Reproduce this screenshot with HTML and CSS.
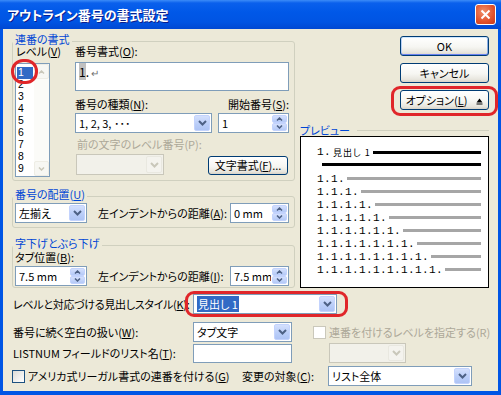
FILE: index.html
```html
<!DOCTYPE html>
<html lang="ja">
<head>
<meta charset="UTF-8">
<title>アウトライン番号の書式設定</title>
<link rel="stylesheet" href="styles.css">
</head>
<body>
<div class="window">
	<div class="titlebar">
		<span class="title">アウトライン番号の書式設定</span>
		<span class="close"><svg width="11" height="11" viewBox="0 0 11 11"><path d="M1.5 1.5L9.5 9.5M9.5 1.5L1.5 9.5" stroke="#fff" stroke-width="2"/></svg></span>
	</div>
	<div class="client">
		<div class="top">
			<div class="left">
				<fieldset class="group g1">
					<legend>連番の書式</legend>
					<div class="g-body">
						<div class="level">
							<div class="lbl">レベル(<u>V</u>)</div>
							<div class="listbox">
								<div class="items">
									<div class="item sel">1</div>
									<div class="item">2</div>
									<div class="item">3</div>
									<div class="item">4</div>
									<div class="item">5</div>
									<div class="item">6</div>
									<div class="item">7</div>
									<div class="item">8</div>
									<div class="item">9</div>
								</div>
								<div class="vscroll">
									<span class="sbtn"><svg width="7" height="4" viewBox="0 0 7 4"><path d="M1 3.5L3.5 1L6 3.5" fill="none" stroke="#C9C7BA" stroke-width="1.5"/></svg></span>
									<span class="sbtn"><svg width="7" height="4" viewBox="0 0 7 4"><path d="M1 0.5L3.5 3L6 0.5" fill="none" stroke="#C9C7BA" stroke-width="1.5"/></svg></span>
								</div>
							</div>
						</div>
						<div class="fmt">
							<div class="lbl">番号書式(<u>O</u>):</div>
							<div class="edit tall"><span class="field">1</span>.<span class="para">↵</span></div>
							<div class="row labels">
								<span class="w-kind">番号の種類(<u>N</u>):</span>
								<span>開始番号(<u>S</u>):</span>
							</div>
							<div class="row">
								<div class="combo w-kind">
									<span class="val">1, 2, 3, ･･･</span>
									<span class="drop"><svg width="9" height="6" viewBox="0 0 9 6"><path d="M1 1L4.5 4.5L8 1" fill="none" stroke="#4D6185" stroke-width="2"/></svg></span>
								</div>
								<div class="spin w-start">
									<span class="val">1</span>
									<span class="arrows">
										<span><svg width="7" height="4" viewBox="0 0 7 4"><path d="M1 3.5L3.5 1L6 3.5" fill="none" stroke="#4D6185" stroke-width="1.5"/></svg></span>
										<span><svg width="7" height="4" viewBox="0 0 7 4"><path d="M1 0.5L3.5 3L6 0.5" fill="none" stroke="#4D6185" stroke-width="1.5"/></svg></span>
									</span>
								</div>
							</div>
							<div class="lbl dis prev-lbl">前の文字のレベル番号(P):</div>
							<div class="row bottom-row">
								<div class="combo disabled w-prev">
									<span class="val"></span>
									<span class="drop"><svg width="9" height="6" viewBox="0 0 9 6"><path d="M1 1L4.5 4.5L8 1" fill="none" stroke="#C9C7BA" stroke-width="2"/></svg></span>
								</div>
								<span class="btn w-font">文字書式(<u>F</u>)...</span>
							</div>
						</div>
					</div>
				</fieldset>

				<fieldset class="group g2">
					<legend>番号の配置(<u>U</u>)</legend>
					<div class="g-body line">
						<div class="combo w-small">
							<span class="val">左揃え</span>
							<span class="drop"><svg width="9" height="6" viewBox="0 0 9 6"><path d="M1 1L4.5 4.5L8 1" fill="none" stroke="#4D6185" stroke-width="2"/></svg></span>
						</div>
						<span class="mid-lbl">左インデントからの距離(<u>A</u>):</span>
						<div class="spin w-mm">
							<span class="val">0 mm</span>
							<span class="arrows">
								<span><svg width="7" height="4" viewBox="0 0 7 4"><path d="M1 3.5L3.5 1L6 3.5" fill="none" stroke="#4D6185" stroke-width="1.5"/></svg></span>
								<span><svg width="7" height="4" viewBox="0 0 7 4"><path d="M1 0.5L3.5 3L6 0.5" fill="none" stroke="#4D6185" stroke-width="1.5"/></svg></span>
							</span>
						</div>
					</div>
				</fieldset>

				<fieldset class="group g3">
					<legend>字下げとぶら下げ</legend>
					<div class="g-body">
						<div class="lbl tab-lbl">タブ位置(<u>B</u>):</div>
						<div class="line">
							<div class="spin w-small">
								<span class="val">7.5 mm</span>
								<span class="arrows">
									<span><svg width="7" height="4" viewBox="0 0 7 4"><path d="M1 3.5L3.5 1L6 3.5" fill="none" stroke="#4D6185" stroke-width="1.5"/></svg></span>
									<span><svg width="7" height="4" viewBox="0 0 7 4"><path d="M1 0.5L3.5 3L6 0.5" fill="none" stroke="#4D6185" stroke-width="1.5"/></svg></span>
								</span>
							</div>
							<span class="mid-lbl">左インデントからの距離(<u>I</u>):</span>
							<div class="spin w-mm">
								<span class="val">7.5 mm</span>
								<span class="arrows">
									<span><svg width="7" height="4" viewBox="0 0 7 4"><path d="M1 3.5L3.5 1L6 3.5" fill="none" stroke="#4D6185" stroke-width="1.5"/></svg></span>
									<span><svg width="7" height="4" viewBox="0 0 7 4"><path d="M1 0.5L3.5 3L6 0.5" fill="none" stroke="#4D6185" stroke-width="1.5"/></svg></span>
								</span>
							</div>
						</div>
					</div>
				</fieldset>
			</div>

			<div class="right">
				<span class="btn default">OK</span>
				<span class="btn">キャンセル</span>
				<span class="btn">オプション(<u>L</u>)<svg class="tri" width="7" height="7" viewBox="0 0 7 7"><path d="M3.5 0.5L6.5 4.5H0.5Z" fill="#000"/><rect x="0.5" y="5.5" width="6" height="1" fill="#000"/></svg></span>
				<div class="pv-head">プレビュー</div>
				<div class="preview">
					<div class="pv-row first">
						<span class="num">1.</span><span class="head">見出し 1</span><span class="bar black"></span>
					</div>
					<div class="bar black wrap"></div>
					<div class="pv-row"><span class="num">1.1.</span><span class="bar"></span></div>
					<div class="pv-row"><span class="num">1.1.1.</span><span class="bar"></span></div>
					<div class="pv-row"><span class="num">1.1.1.1.</span><span class="bar"></span></div>
					<div class="pv-row"><span class="num">1.1.1.1.1.</span><span class="bar"></span></div>
					<div class="pv-row"><span class="num">1.1.1.1.1.1.</span><span class="bar"></span></div>
					<div class="pv-row"><span class="num">1.1.1.1.1.1.1.</span><span class="bar"></span></div>
					<div class="pv-row"><span class="num">1.1.1.1.1.1.1.1.</span><span class="bar"></span></div>
					<div class="pv-row"><span class="num">1.1.1.1.1.1.1.1.1.</span><span class="bar"></span></div>
				</div>
			</div>
		</div>

		<div class="rows">
			<div class="frow ra">
				<span class="flbl">レベルと対応づける見出しスタイル(<u>K</u>):</span>
				<div class="combo w-style">
					<span class="val"><span class="hl">見出し 1</span></span>
					<span class="drop"><svg width="9" height="6" viewBox="0 0 9 6"><path d="M1 1L4.5 4.5L8 1" fill="none" stroke="#4D6185" stroke-width="2"/></svg></span>
				</div>
			</div>
			<div class="frow rb">
				<span class="flbl">番号に続く空白の扱い(<u>W</u>):</span>
				<div class="combo w-mid">
					<span class="val">タブ文字</span>
					<span class="drop"><svg width="9" height="6" viewBox="0 0 9 6"><path d="M1 1L4.5 4.5L8 1" fill="none" stroke="#4D6185" stroke-width="2"/></svg></span>
				</div>
				<span class="check disabled"></span>
				<span class="dis">連番を付けるレベルを指定する(R)</span>
			</div>
			<div class="frow rc">
				<span class="flbl">LISTNUM フィールドのリスト名(<u>T</u>):</span>
				<div class="edit w-mid"></div>
				<div class="combo disabled w-lvl">
					<span class="val"></span>
					<span class="drop"><svg width="9" height="6" viewBox="0 0 9 6"><path d="M1 1L4.5 4.5L8 1" fill="none" stroke="#C9C7BA" stroke-width="2"/></svg></span>
				</div>
			</div>
			<div class="frow rd">
				<span class="legal"><span class="check"></span>アメリカ式リーガル書式の連番を付ける(<u>G</u>)</span>
				<span class="target-lbl">変更の対象(<u>C</u>):</span>
				<div class="combo w-target">
					<span class="val">リスト全体</span>
					<span class="drop"><svg width="9" height="6" viewBox="0 0 9 6"><path d="M1 1L4.5 4.5L8 1" fill="none" stroke="#4D6185" stroke-width="2"/></svg></span>
				</div>
			</div>
		</div>
	</div>

	<div class="mark mark-level"></div>
	<div class="mark mark-option"></div>
	<div class="mark mark-style"></div>
</div>
</body>
</html>
```

FILE: styles.css
```css
* {
	box-sizing: border-box;
}
body {
	margin: 0;
	font-family: "Noto Sans CJK JP", "Liberation Sans", sans-serif;
	font-size: 11px;
	font-feature-settings: "palt";
	white-space: nowrap;
	color: #000;
	background: #ece9d8;
}
u {
	text-decoration: underline;
	text-underline-offset: 1px;
}
.window {
	position: relative;
	width: 501px;
	height: 395px;
	background: #0055e5;
	display: flex;
	flex-direction: column;
}
.titlebar {
	height: 29px;
	flex: none;
	display: flex;
	align-items: center;
	padding: 0 5px 0 7px;
	background: linear-gradient(#3c8cf8 0, #0a60ec 3px, #0058e8 12px, #0054e3 22px, #0048d2 29px);
}
.title {
	flex: 1;
	color: #fff;
	font-weight: bold;
	font-size: 13px;
	text-shadow: 1px 1px 0 #0a1e8c;
}
.close {
	width: 21px;
	height: 21px;
	border: 1px solid #fff;
	border-radius: 3px;
	background: radial-gradient(circle at 40% 35%, #f0906a, #e1512c 60%, #c4391a);
	display: flex;
	align-items: center;
	justify-content: center;
}
.client {
	flex: 1;
	margin: 0 3px 4px;
	background: #ece9d8;
	padding: 4px 0 0 9px;
}
.top {
	display: flex;
}
.left {
	width: 283px;
}

/* group boxes */
.group {
	margin: 0;
	padding: 0 5px 0 2px;
	border: 1px solid #d0d0bf;
	border-radius: 3px;
	min-width: 0;
}
.group legend {
	height: 16px;
	line-height: 12px;
	padding: 0 2px;
	margin-left: -2px;
	color: #0046d5;
}
.g-body {
	margin-top: -5px;
}
.g1 {
	padding-bottom: 3px;
}
.g1 .g-body {
	display: flex;
}
.g2 {
	margin-top: 7px;
	padding-bottom: 4px;
}
.g2 .g-body {
	margin-top: -1px;
}
.g3 {
	margin-top: 9px;
	padding-bottom: 1px;
}
.line {
	display: flex;
	align-items: center;
	height: 20px;
}
.mid-lbl {
	margin-left: 11px;
}
.line .w-mm {
	margin-left: auto;
}
.lbl {
	line-height: 14px;
}
.tab-lbl {
	height: 18px;
	padding-top: 2px;
}
.dis {
	color: #aca899;
}

/* level list */
.level {
	width: 35px;
	flex: none;
}
.level .lbl {
	height: 19px;
	padding-left: 1px;
}
.listbox {
	height: 114px;
	border: 1px solid #7f9db9;
	background: #fff;
	display: flex;
}
.items {
	flex: 1;
	padding: 3px 0 0 1px;
	font-family: "Liberation Sans", sans-serif;
	font-size: 10.4px;
}
.item {
	height: 12px;
	line-height: 12px;
	padding-left: 1px;
}
.item.sel {
	background: #316ac5;
	color: #fff;
	width: 16px;
}
.vscroll {
	width: 15px;
	background: #fbfbf8;
	display: flex;
	flex-direction: column;
	justify-content: space-between;
}
.sbtn {
	height: 15px;
	border: 1px solid #eeede5;
	border-radius: 2px;
	background: #f7f7f3;
	display: flex;
	align-items: center;
	justify-content: center;
}

/* format column */
.fmt {
	width: 214px;
	margin-left: 25px;
}
.fmt > .lbl:first-child {
	height: 18px;
}
.edit {
	border: 1px solid #7f9db9;
	background: #fff;
}
.edit.tall {
	height: 29px;
	padding: 2px 0 0 3px;
	line-height: 14px;
	font-size: 12px;
}
.field {
	background: #c0c0c0;
}
.para {
	color: #707070;
	font-size: 10px;
	margin-left: 2px;
}
.row {
	display: flex;
	justify-content: space-between;
}
.row.labels {
	height: 16px;
	margin-top: 6px;
	line-height: 14px;
}
.row.labels .w-kind {
	width: 143px;
}
.prev-lbl {
	height: 16px;
	margin-top: 3px;
	padding-top: 1px;
	padding-left: 2px;
}
.bottom-row {
	height: 23px;
	align-items: flex-end;
}

/* controls */
.combo,
.spin {
	height: 20px;
	border: 1px solid #7f9db9;
	background: #fff;
	display: flex;
	flex: none;
}
.combo .val,
.spin .val {
	flex: 1;
	padding-left: 3px;
	line-height: 18px;
	overflow: hidden;
}
.drop {
	width: 16px;
	margin: 1px;
	border: 1px solid #c3d3fd;
	border-radius: 2px;
	background: linear-gradient(#d4e0fd, #b9cdf8 60%, #aec4f5);
	display: flex;
	align-items: center;
	justify-content: center;
}
.arrows {
	width: 15px;
	flex: none;
	margin: 1px;
	display: flex;
	flex-direction: column;
}
.arrows span {
	flex: 1;
	border: 1px solid #c3d3fd;
	border-radius: 2px;
	background: linear-gradient(#d4e0fd, #b4c9f7);
	display: flex;
	align-items: center;
	justify-content: center;
}
.combo.disabled {
	border-color: #c9c7ba;
	background: #f2f1ea;
}
.combo.disabled .drop {
	border-color: #e9e8e0;
	background: #f4f3ee;
}
.w-kind {
	width: 137px;
}
.w-start {
	width: 71px;
}
.w-prev {
	width: 88px;
	height: 21px;
	margin-left: 1px;
}
.w-small {
	width: 72px;
}
.w-mm {
	width: 59px;
}
.btn {
	display: block;
	height: 20px;
	border: 1px solid #003c74;
	border-radius: 3px;
	background: linear-gradient(#fff, #f6f6f2 55%, #e8e6de 85%, #d8d3c8);
	text-align: center;
	line-height: 18px;
}
.btn.default {
	box-shadow: inset 0 1px #cee7ff, inset 0 -1px #6982ee, inset 1px 0 #b9d1f6, inset -1px 0 #89ade4;
}
.w-font {
	width: 80px;
	height: 19px;
	line-height: 17px;
	margin-right: 1px;
}
.tri {
	margin-left: 9px;
	vertical-align: 0;
}

/* right column */
.right {
	width: 189px;
	margin-left: 5px;
	display: flex;
	flex-direction: column;
}
.right .btn {
	width: 89px;
	align-self: flex-end;
	margin-top: 7px;
}
.right .btn:first-child {
	margin-top: 3px;
}
.pv-head {
	height: 12px;
	line-height: 12px;
	margin-top: 14px;
	color: #0046d5;
	display: flex;
	align-items: center;
}
.pv-head::after {
	content: "";
	flex: 1;
	height: 1px;
	margin-left: 7px;
	background: #d0d0bf;
}
.preview {
	height: 152px;
	border: 1px solid #000;
	background: #fff;
	padding: 8px 7px 0 16px;
}
.pv-row {
	display: flex;
	align-items: center;
	height: 13px;
}
.pv-row.first {
	height: 14px;
	margin-bottom: 4px;
}
.num {
	font-family: "Liberation Mono", monospace;
	font-size: 11px;
	letter-spacing: 0.4px;
}
.head {
	font-size: 9px;
	margin-left: 2px;
	letter-spacing: 1px;
}
.bar {
	flex: 1;
	height: 3px;
	margin-left: 2px;
	background: #a6a6a6;
}
.bar.black {
	background: #000;
}
.bar.wrap {
	flex: none;
	margin: 0 0 6px 5px;
}

/* bottom rows */
.rows {
	margin-top: 6px;
}
.frow {
	display: flex;
	align-items: center;
	height: 20px;
}
.flbl {
	width: 181px;
	flex: none;
	padding-left: 1px;
}
.ra .flbl {
	letter-spacing: -0.3px;
}
.rb {
	margin-top: 8px;
}
.rc {
	margin-top: 1px;
}
.rd {
	margin-top: 3px;
}
.w-style {
	width: 144px;
}
.hl {
	background: #316ac5;
	color: #fff;
	padding: 0 1px;
}
.w-mid {
	width: 99px;
}
.rc .edit {
	height: 19px;
}
.w-lvl {
	width: 77px;
	margin-left: 37px;
}
.check {
	width: 13px;
	height: 13px;
	border: 1px solid #1c5180;
	background: linear-gradient(135deg, #dcdcd7, #fff);
	margin-right: 3px;
	flex: none;
}
.check.disabled {
	border-color: #cac8bb;
	background: #fff;
	margin-left: 21px;
}
.legal {
	width: 230px;
	flex: none;
	display: flex;
	align-items: center;
}
.target-lbl {
	width: 86px;
	flex: none;
}
.w-target {
	width: 144px;
}

/* red annotation marks */
.mark {
	position: absolute;
	border: 3px solid #e0262a;
}
.mark-level {
	left: 11px;
	top: 59px;
	width: 27px;
	height: 25px;
	border-radius: 12px;
}
.mark-option {
	left: 391px;
	top: 86px;
	width: 107px;
	height: 30px;
	border-radius: 9px;
}
.mark-style {
	left: 185px;
	top: 291px;
	width: 163px;
	height: 26px;
	border-radius: 9px;
}
```
